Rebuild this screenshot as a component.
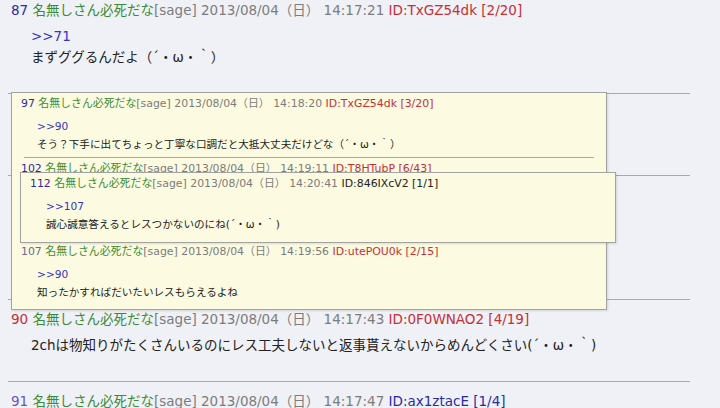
const font = { fontFamily: '"DejaVu Sans", "Noto Sans CJK JP", sans-serif' }

const basePosts = [
  {
    no: 87, noColor: 'text-[#2b2ba3]', time: '14:17:21', id: 'TxGZ54dk', count: '2/20', idColor: 'text-[#c62f35]',
    anchor: '>>71', lines: ['まずググるんだよ（´・ω・｀）'], first: true,
  },
  {
    no: 88, noColor: 'text-[#2b2ba3]', time: '14:17:28', id: 'k3RmQ8vT', count: '1/3', idColor: 'text-[#2b2ba3]',
    lines: ['聞き方ひとつで全然違うよな'],
  },
  {
    no: 89, noColor: 'text-[#2b2ba3]', time: '14:17:35', id: 'Wq2LpZ0a', count: '2/7', idColor: 'text-[#2b2ba3]',
    lines: ['それな', '結局は書き方次第', 'テンプレ読めって話'],
  },
  {
    no: 90, noColor: 'text-[#c62f35]', time: '14:17:43', id: '0F0WNAO2', count: '4/19', idColor: 'text-[#c62f35]',
    lines: ['2chは物知りがたくさんいるのにレス工夫しないと返事貰えないからめんどくさい(´・ω・｀)'],
  },
  {
    no: 91, noColor: 'text-[#6357c4]', time: '14:17:47', id: 'ax1ztacE', count: '1/4', idColor: 'text-[#2b2ba3]',
    lines: ['ググレカス'],
  },
]

const popupPosts = [
  {
    no: 97, noColor: 'text-[#2b2ba3]', time: '14:18:20', id: 'TxGZ54dk', count: '3/20', idColor: 'text-[#c62f35]',
    anchor: '>>90', lines: ['そう？下手に出てちょっと丁寧な口調だと大抵大丈夫だけどな（´・ω・｀）'],
  },
  {
    no: 102, noColor: 'text-[#2b2ba3]', time: '14:19:11', id: 'T8HTubP', count: '6/43', idColor: 'text-[#c62f35]',
    anchor: '>>90', lines: ['間違ったこと書くと一斉に突っ込まれるからな', 'それで答えが出てくる'],
  },
  {
    no: 107, noColor: 'text-[#6b6b8c]', time: '14:19:56', id: 'utePOU0k', count: '2/15', idColor: 'text-[#c62f35]',
    anchor: '>>90', lines: ['知ったかすればだいたいレスもらえるよね'],
  },
]

const nested = {
  no: 112, noColor: 'text-[#2b2ba3]', time: '14:20:41', id: '846IXcV2', count: '1/1', idColor: 'text-[#222222]',
  anchor: '>>107', lines: ['誠心誠意答えるとレスつかないのにね(´・ω・｀)'],
}

function Header({ p }) {
  return (
    <div className="whitespace-nowrap">
      <span className={p.noColor}>{p.no}</span>{' '}
      <span className="text-[#3b8b35]">名無しさん必死だな</span>
      <span className="text-[#7c7c7c]">[sage] 2013/08/04（日） {p.time}</span>{' '}
      <span className={p.idColor}>ID:{p.id} [{p.count}]</span>
    </div>
  )
}

function BasePost({ p }) {
  return (
    <div>
      <div className={p.first ? 'pl-[3px]' : 'pl-[3px] pt-[9px]'}>
        <div className="text-[13.5px] leading-[20px]">
          <Header p={p} />
        </div>
        <div className="mt-[6px] pl-[20px] pb-[25px] text-[13.5px] leading-[21px] text-[#222]">
          {p.anchor && <div className="text-[#3535bf]">{p.anchor}</div>}
          {p.lines.map((l, i) => (
            <div key={i} className="whitespace-nowrap">{l}</div>
          ))}
        </div>
      </div>
      <div className="h-px bg-[#a9a9ad]" />
    </div>
  )
}

function PopupPost({ p, last }) {
  return (
    <div>
      <div className="pt-[2px] text-[10.9px] leading-[18px]">
        <Header p={p} />
      </div>
      <div className="mt-[4px] pb-[4px] pl-[16px] text-[10.6px] leading-[18px] text-[#222]">
        {p.anchor && <div className="text-[#3535bf]">{p.anchor}</div>}
        {p.lines.map((l, i) => (
          <div key={i} className="whitespace-nowrap">{l}</div>
        ))}
      </div>
      {!last && <div className="ml-[3px] mr-[3px] h-px bg-[#a9a9ad]" />}
    </div>
  )
}

export default function App() {
  return (
    <div style={font} className="relative h-[408px] w-[720px] overflow-hidden bg-[#eff1f7]">
      {/* thread */}
      <div className="pl-[8px] pr-[30px]">
        {basePosts.map((p) => (
          <BasePost key={p.no} p={p} />
        ))}
      </div>

      {/* reply popup */}
      <div className="absolute left-[11px] top-[92px] w-[596px] border border-[#a3a3a3] bg-[#fcfbe1] pl-[9px] pr-[9px] pb-[4px] shadow-[1px_1px_2px_rgba(0,0,0,0.12)]">
        {popupPosts.map((p, i) => (
          <PopupPost key={p.no} p={p} last={i === popupPosts.length - 1} />
        ))}
      </div>

      {/* nested popup */}
      <div className="absolute left-[20px] top-[172px] w-[596px] border border-[#a3a3a3] bg-[#fcfbe1] pl-[9px] pr-[9px] pb-[5px] shadow-[1px_1px_2px_rgba(0,0,0,0.12)]">
        <PopupPost p={nested} last />
      </div>
    </div>
  )
}
